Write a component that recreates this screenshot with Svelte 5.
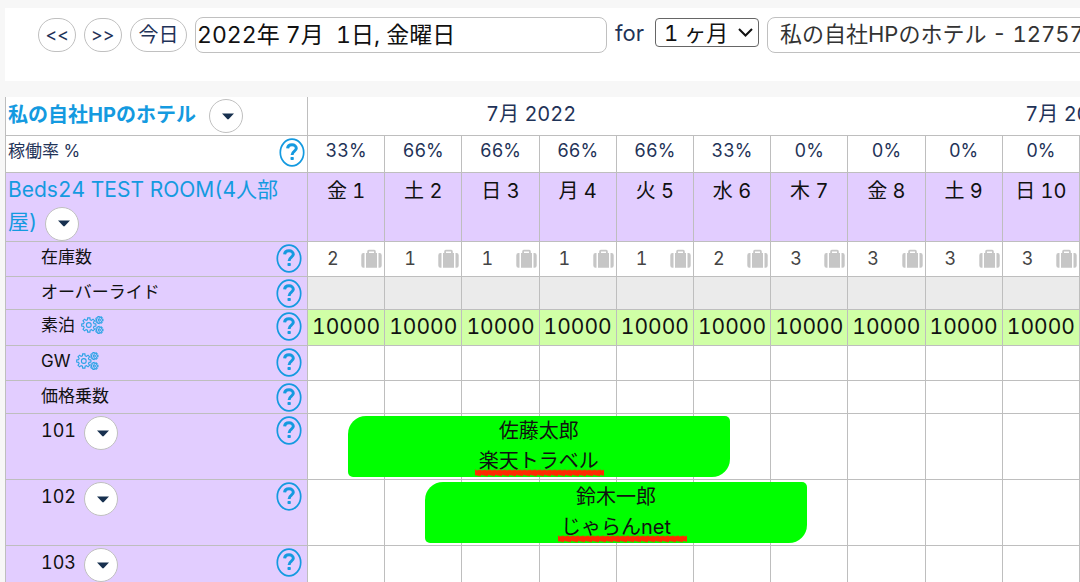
<script lang="ts">
  type Booking = { day: number; guest: string; source: string; shift: boolean };
  type Unit = { name: string; booking?: Booking };

  const days = ["金 1", "土 2", "日 3", "月 4", "火 5", "水 6", "木 7", "金 8", "土 9", "日 10"];
  const occupancy = [33, 66, 66, 66, 66, 33, 0, 0, 0, 0];
  const stock = [2, 1, 1, 1, 1, 2, 3, 3, 3, 3];

  const units: Unit[] = [
    { name: "101", booking: { day: 0, guest: "佐藤太郎", source: "楽天トラベル", shift: false } },
    { name: "102", booking: { day: 1, guest: "鈴木一郎", source: "じゃらんnet", shift: true } },
    { name: "103" },
  ];

  let date = "2022年 7月  1日, 金曜日";

  function gear(cx: number, cy: number, outer: number, inner: number, teeth: number) {
    const points: string[] = [];
    const step = (Math.PI * 2) / teeth;
    for (let i = 0; i < teeth; i++) {
      for (const [offset, r] of [[-0.32, inner], [-0.2, outer], [0.2, outer], [0.32, inner]]) {
        const a = (i + offset) * step;
        points.push(`${(cx + r * Math.cos(a)).toFixed(2)} ${(cy + r * Math.sin(a)).toFixed(2)}`);
      }
    }
    return `M${points.join("L")}Z`;
  }

  // rough marker stroke, alternating top and bottom edges
  function marker() {
    const top: string[] = [];
    const bottom: string[] = [];
    for (let x = 0; x <= 129; x += 1) {
      top.push(`${x} ${(0.2 + ((x * 7) % 5) * 0.4).toFixed(1)}`);
      bottom.unshift(`${x} ${(5.4 + ((x * 11) % 7) * 0.4).toFixed(1)}`);
    }
    return `M${top.join("L")}L${bottom.join("L")}Z`;
  }
</script>

{#snippet help()}
  <button class="help" aria-label="ヘルプ">
    <svg viewBox="0 0 26 29" width="26" height="29">
      <ellipse cx="13" cy="14.5" rx="11.7" ry="13.3" />
      <path d="M8.6 10.4C8.8 7.9 10.6 6.8 13 6.8C15.6 6.8 17.3 8.3 17.3 10.3C17.3 13.2 13.1 13.1 13.1 17" />
      <rect x="11.5" y="18.9" width="3.3" height="3.2" rx=".8" />
    </svg>
  </button>
{/snippet}

{#snippet menu(label: string)}
  <button class="menu" aria-label={label}>
    <svg viewBox="0 0 12 7" width="12" height="7"><path d="M0 .5H12L6.8 6Q6 6.8 5.2 6Z" /></svg>
  </button>
{/snippet}

{#snippet cogs()}
  <svg class="cogs" viewBox="0 0 23 18" width="23" height="18">
    <path d={gear(7.8, 9, 7.2, 5.4, 8)} />
    <circle cx="7.8" cy="9" r="2.4" />
    <path d={gear(18.3, 4, 3.7, 2.8, 7)} />
    <circle cx="18.3" cy="4" r="1.1" />
    <path d={gear(18.3, 14, 3.7, 2.8, 7)} />
    <circle cx="18.3" cy="14" r="1.1" />
  </svg>
{/snippet}

{#snippet chevron()}
  <svg class="chevron" viewBox="0 0 15 9" width="15" height="9"><path d="M1 1L7.5 7.5L14 1" /></svg>
{/snippet}

<div class="page">
  <form class="toolbar">
    <button type="button" class="nav">&lt;&lt;</button>
    <button type="button" class="nav">&gt;&gt;</button>
    <button type="button" class="nav today">今日</button>
    <input type="text" aria-label="日付" bind:value={date} />
    <label for="span">for</label>
    <div class="select">
      <select id="span">
        <option>1 ヶ月</option>
      </select>
      {@render chevron()}
    </div>
    <select class="property" aria-label="施設">
      <option>私の自社HPのホテル - 12757</option>
    </select>
  </form>

  <table>
    <colgroup>
      <col class="labels" />
      {#each days as day}
        <col />
      {/each}
    </colgroup>
    <thead>
      <tr class="months">
        <th>
          <div class="head">
            <a class="hotel" href="#hotel">私の自社HPのホテル</a>
            {@render menu("施設メニュー")}
          </div>
        </th>
        <td class="month" colspan="7">7月 2022</td>
        <td class="month next" colspan="3">7月 2022</td>
      </tr>
      <tr class="occupancy">
        <th>
          <div class="head">
            <span>稼働率 %</span>
            {@render help()}
          </div>
        </th>
        {#each occupancy as value}
          <td>{value}%</td>
        {/each}
      </tr>
    </thead>
    <tbody>
      <tr class="days">
        <th>
          <a href="#room">Beds24 TEST ROOM(4人部屋)</a>
          {@render menu("部屋メニュー")}
        </th>
        {#each days as day}
          <td>{day}</td>
        {/each}
      </tr>
      <tr class="stock">
        <th><div class="row"><span>在庫数</span>{@render help()}</div></th>
        {#each stock as count}
          <td>
            <div class="count">
              <span>{count}</span>
              <svg viewBox="0 0 21 20" width="21" height="20">
                <path d="M3.5 4V18.8H2.5Q.3 18.8 .3 16.6V6.2Q.3 4 2.5 4ZM17.5 4H18.5Q20.7 4 20.7 6.2V16.6Q20.7 18.8 18.5 18.8H17.5Z" />
                <path fill-rule="evenodd" d="M5 18.8V4H6.2V2.4Q6.2 .8 7.8 .8H13.2Q14.8 .8 14.8 2.4V4H16V18.8ZM8 4H13V2.6H8Z" />
              </svg>
            </div>
          </td>
        {/each}
      </tr>
      <tr class="override">
        <th><div class="row"><span>オーバーライド</span>{@render help()}</div></th>
        {#each days as day}
          <td></td>
        {/each}
      </tr>
      <tr class="price">
        <th><div class="row"><span>素泊 {@render cogs()}</span>{@render help()}</div></th>
        {#each days as day}
          <td>10000</td>
        {/each}
      </tr>
      <tr class="empty">
        <th><div class="row"><span>GW {@render cogs()}</span>{@render help()}</div></th>
        {#each days as day}
          <td></td>
        {/each}
      </tr>
      <tr class="factor">
        <th><div class="row"><span>価格乗数</span>{@render help()}</div></th>
        {#each days as day}
          <td></td>
        {/each}
      </tr>
      {#each units as unit}
        <tr class="unit">
          <th>
            <div class="row">
              <span>{unit.name}</span>
              {@render menu(unit.name)}
              {@render help()}
            </div>
          </th>
          {#each days as day, i}
            <td>
              {#if unit.booking && unit.booking.day === i}
                <div class="booking">
                  <div>{unit.booking.guest}</div>
                  <div>{unit.booking.source}</div>
                  <svg class="marker" class:shift={unit.booking.shift} viewBox="0 0 129 8" width="129" height="8">
                    <path d={marker()} />
                  </svg>
                </div>
              {/if}
            </td>
          {/each}
        </tr>
      {/each}
    </tbody>
  </table>
</div>

<style>
  :global(body) {
    margin: 0;
    background: #f7f7f7;
  }
  .page {
    box-sizing: border-box;
    height: 100vh;
    overflow: hidden;
    padding: 8px 0 0 5px;
    font-family: Inter, "Noto Sans CJK JP", sans-serif;
    font-size: 20px;
    font-variant-numeric: tabular-nums;
    color: #1f3358;
  }
  button,
  input,
  select {
    box-sizing: border-box;
    margin: 0;
    font: inherit;
    font-variant-numeric: tabular-nums;
    color: inherit;
    background: #fff;
  }
  a {
    color: #149ae0;
    text-decoration: none;
  }
  svg {
    display: block;
    flex: none;
  }

  .toolbar {
    display: flex;
    align-items: flex-start;
    gap: 8px;
    box-sizing: border-box;
    height: 73px;
    padding: 9px 0 0 33px;
    overflow: hidden;
    background: #fff;
    font-size: 22px;
  }
  .toolbar > * {
    flex: none;
  }
  .nav {
    width: 38px;
    height: 34px;
    margin-top: 1px;
    padding: 0;
    border: 1px solid #c0c0c0;
    border-radius: 17px;
    font-size: 18px;
    line-height: 32px;
  }
  .today {
    width: 57px;
    font-size: 20px;
  }
  .toolbar input {
    width: 412px;
    height: 36px;
    padding: 0 1px 4px;
    border: 1px solid #c0c0c0;
    border-radius: 8px;
    color: #111;
    font-size: 23px;
  }
  .toolbar label {
    width: 32px;
    line-height: 32px;
  }
  .select {
    position: relative;
    width: 104px;
    margin-top: 1px;
  }
  select {
    appearance: none;
    width: 100%;
    height: 29px;
    padding: 0 0 0 8px;
    border: 1px solid #666;
    border-radius: 4px;
    color: #111;
    line-height: 26px;
  }
  .chevron {
    position: absolute;
    top: 10px;
    right: 6px;
    fill: none;
    stroke: #111;
    stroke-width: 2;
    pointer-events: none;
  }
  .toolbar .property {
    width: 412px;
    height: 36px;
    padding: 0 12px 2px;
    border-color: #c0c0c0;
    border-radius: 8px;
    color: #333;
  }

  table {
    width: 100%;
    margin-top: 16px;
    border-collapse: separate;
    border-spacing: 0;
    border-left: 1px solid #bebebe;
    table-layout: fixed;
    background: #fff;
  }
  .labels {
    width: 302px;
  }
  th,
  td {
    box-sizing: border-box;
    padding: 0;
    border-right: 1px solid #bebebe;
    border-bottom: 1px solid #bebebe;
    font-weight: normal;
    text-align: center;
    vertical-align: top;
  }
  th {
    text-align: left;
  }
  tbody th {
    background: #e2cdff;
    color: #111;
  }

  .months {
    height: 39px;
  }
  .month {
    padding-right: 94px;
    border-right: 0;
    line-height: 35px;
    white-space: nowrap;
  }
  .month.next {
    padding: 0 0 0 177px;
    text-align: left;
    overflow: hidden;
  }
  .head {
    display: flex;
    align-items: flex-start;
    padding: 2px 2px 0;
  }
  .hotel {
    margin-right: 13px;
    font-weight: bold;
    line-height: 32px;
  }
  .occupancy {
    height: 37px;
    font-size: 18px;
    line-height: 30px;
  }
  .occupancy .head {
    justify-content: space-between;
    font-size: 17px;
    line-height: 26px;
  }
  .days {
    height: 69px;
    color: #111;
  }
  .days th {
    padding: 1px 20px 0 2px;
    line-height: 32px;
  }
  .days a {
    font-size: 21px;
  }
  .days td {
    background: #e2cdff;
    line-height: 36px;
  }
  .stock,
  .empty {
    height: 35px;
  }
  .override,
  .factor {
    height: 33px;
  }
  .price {
    height: 36px;
  }
  .unit {
    height: 66px;
  }

  .row {
    display: flex;
    align-items: flex-start;
    padding: 2px 5px 0 35px;
    font-size: 17px;
    line-height: 26px;
  }
  .row span {
    display: flex;
    align-items: center;
    gap: 6px;
  }
  .unit .row {
    font-size: 18px;
    line-height: 30px;
  }
  .count {
    display: flex;
    align-items: center;
    justify-content: space-between;
    padding: 0 2px 0 19px;
    color: #444;
    font-size: 18px;
    line-height: 34px;
  }
  .count svg {
    fill: #c6c6c6;
  }
  .override td {
    background: #ebebeb;
  }
  .price td {
    background: #d0ffa6;
    color: #111;
    font-size: 21px;
    line-height: 34px;
  }

  .help {
    width: 26px;
    height: 29px;
    margin-left: auto;
    padding: 0;
    border: 0;
    background: none;
  }
  .help ellipse,
  .help path {
    fill: none;
    stroke: #149ae0;
    stroke-width: 1.7;
  }
  .help path {
    stroke-width: 3;
  }
  .help rect {
    fill: #149ae0;
  }
  .menu {
    display: inline-flex;
    align-items: center;
    justify-content: center;
    flex: none;
    width: 34px;
    height: 34px;
    padding: 0 0 0 4px;
    border: 1px solid #c0c0c0;
    border-radius: 50%;
    vertical-align: middle;
  }
  .days .menu {
    margin-left: 2px;
  }
  .unit .menu {
    margin-left: 8px;
  }
  .menu path {
    fill: #17304f;
  }
  .cogs {
    fill: none;
    stroke: #2ba3e6;
    stroke-width: 1.1;
  }

  .unit td {
    position: relative;
  }
  .booking {
    position: absolute;
    z-index: 1;
    top: 2px;
    left: 52%;
    box-sizing: border-box;
    width: 502%;
    height: 61px;
    border-radius: 18px 5px;
    background: #00ff00;
    color: #111;
    line-height: 30px;
  }
  .marker {
    position: absolute;
    bottom: 0;
    left: 50%;
    margin-left: -64px;
  }
  .marker.shift {
    margin-left: -58px;
  }
  .marker path {
    fill: #ff2a00;
  }
</style>
